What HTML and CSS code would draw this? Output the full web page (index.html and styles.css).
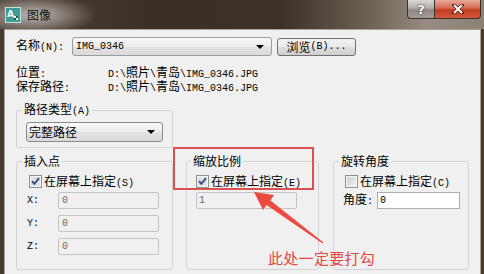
FILE: index.html
```html
<!DOCTYPE html>
<html lang="zh-CN">

<head>
    <meta charset="UTF-8">
    <meta name="viewport" content="width=device-width, initial-scale=1.0">
    <title>图像</title>
    <link rel="stylesheet" href="styles.css">
</head>

<body>
    <div class="window">
        <div class="titlebar">
            <svg class="app-icon" width="16" height="16" viewBox="0 0 16 16">
                <rect x="0.5" y="0.5" width="15" height="15" fill="#3f9c95" stroke="#bfe3df"/>
                <text x="2" y="10" font-family="DejaVu Sans" font-weight="bold" font-size="9" fill="#f4fbfa">A</text>
                <rect x="9" y="9" width="2" height="2" fill="#fff"/>
                <rect x="11" y="11" width="2" height="2" fill="#fff"/>
                <rect x="9" y="11" width="2" height="2" fill="#1f5a55"/>
                <rect x="11" y="9" width="2" height="2" fill="#1f5a55"/>
            </svg>
            <span class="title">图像</span>
            <div class="caption-buttons">
                <div class="cap-btn help">?</div>
                <div class="cap-btn close">
                    <svg width="12" height="10" viewBox="0 0 12 10">
                        <path d="M2 1 L10 9 M10 1 L2 9" stroke="#5a1a10" stroke-width="3.4" stroke-linecap="square"/>
                        <path d="M2 1 L10 9 M10 1 L2 9" stroke="#fff" stroke-width="2"/>
                    </svg>
                </div>
            </div>
        </div>

        <div class="client">
            <div class="name-row">
                <span class="name-label">名称<span class="m">(N):</span></span>
                <div class="combo name-combo"><span class="m">IMG_0346</span><span class="drop"></span></div>
                <div class="btn browse">浏览<span class="m">(B)...</span></div>
            </div>

            <div class="info">
                <div class="info-row">
                    <span class="info-label">位置<span class="m">:</span></span>
                    <span class="m">D:\<span class="cj">照片</span>\<span class="cj">青岛</span>\IMG_0346.JPG</span>
                </div>
                <div class="info-row">
                    <span class="info-label">保存路径<span class="m">:</span></span>
                    <span class="m">D:\<span class="cj">照片</span>\<span class="cj">青岛</span>\IMG_0346.JPG</span>
                </div>
            </div>

            <fieldset class="group path-group">
                <legend>路径类型<span class="m">(A)</span></legend>
                <div class="combo path-combo">完整路径<span class="drop"></span></div>
            </fieldset>

            <div class="groups">
                <fieldset class="group insert-group">
                    <legend>插入点</legend>
                    <div class="check-row">
                        <svg class="check" width="13" height="13" viewBox="0 0 13 13">
                            <rect x="0.5" y="0.5" width="12" height="12" fill="#f6f6f6" stroke="#8e8f8f"/>
                            <rect x="2" y="2" width="9" height="9" fill="#dde1e6"/>
                            <path d="M3 6.2 L5.4 8.8 L10 3.2" fill="none" stroke="#3b4f86" stroke-width="2"/>
                        </svg>
                        <span>在屏幕上指定<span class="m">(S)</span></span>
                    </div>
                    <div class="field-row first">
                        <span class="axis m">X:</span>
                        <div class="input disabled"><span class="m">0</span></div>
                    </div>
                    <div class="field-row">
                        <span class="axis m">Y:</span>
                        <div class="input disabled"><span class="m">0</span></div>
                    </div>
                    <div class="field-row">
                        <span class="axis m">Z:</span>
                        <div class="input disabled"><span class="m">0</span></div>
                    </div>
                </fieldset>

                <fieldset class="group scale-group">
                    <legend>缩放比例</legend>
                    <div class="check-row">
                        <svg class="check" width="13" height="13" viewBox="0 0 13 13">
                            <rect x="0.5" y="0.5" width="12" height="12" fill="#f6f6f6" stroke="#8e8f8f"/>
                            <rect x="2" y="2" width="9" height="9" fill="#dde1e6"/>
                            <path d="M3 6.2 L5.4 8.8 L10 3.2" fill="none" stroke="#3b4f86" stroke-width="2"/>
                        </svg>
                        <span>在屏幕上指定<span class="m">(E)</span></span>
                    </div>
                    <div class="field-row first">
                        <div class="input disabled"><span class="m">1</span></div>
                    </div>
                </fieldset>

                <fieldset class="group rotate-group">
                    <legend>旋转角度</legend>
                    <div class="check-row">
                        <svg class="check" width="13" height="13" viewBox="0 0 13 13">
                            <defs>
                                <linearGradient id="unchk" x1="0" y1="0" x2="1" y2="1">
                                    <stop offset="0" stop-color="#cfcfcf"/>
                                    <stop offset="1" stop-color="#f4f4f4"/>
                                </linearGradient>
                            </defs>
                            <rect x="0.5" y="0.5" width="12" height="12" fill="#f6f6f6" stroke="#8e8f8f"/>
                            <rect x="2" y="2" width="9" height="9" fill="url(#unchk)"/>
                        </svg>
                        <span>在屏幕上指定<span class="m">(C)</span></span>
                    </div>
                    <div class="field-row first">
                        <span class="angle-label">角度<span class="m">:</span></span>
                        <div class="input"><span class="m">0</span></div>
                    </div>
                </fieldset>
            </div>
        </div>

        <!-- annotation drawn over the dialog -->
        <div class="mark"></div>
        <svg class="pointer" width="484" height="274" viewBox="0 0 484 274">
            <polygon points="254,192 274,195 270.5,200.5 323.4,242.6 322.6,243.4 266.5,205 263,210" fill="#ec4a40"/>
        </svg>
        <div class="note">此处一定要打勾</div>
    </div>
</body>

</html>
```

FILE: styles.css
```css
* {
    box-sizing: border-box;
}

html,
body {
    margin: 0;
}

body {
    width: 484px;
    height: 274px;
    overflow: hidden;
    font: 12px/14px "Noto Sans CJK SC", sans-serif;
    color: #000;
    background: #f0f0f0;
}

.m {
    font-family: "Liberation Mono", monospace;
    font-size: 10px;
}

.m .cj {
    font-family: "Noto Sans CJK SC", sans-serif;
    font-size: 12px;
}

.window {
    position: relative;
    width: 484px;
    height: 274px;
    display: flex;
    flex-direction: column;
    background: #47392e;
}

.titlebar {
    flex: none;
    height: 29px;
    display: flex;
    align-items: flex-start;
    padding: 0 3px 0 5px;
    background:
        radial-gradient(ellipse 62px 20px at 34px 15px, rgba(196, 192, 188, 0.95), rgba(196, 192, 188, 0) 100%),
        linear-gradient(to right, #51443a 0%, #3b2f26 30%, #3c3027 58%, #6c6055 76%, #978c81 88%, #8c8074 100%);
}

.app-icon {
    margin-top: 7px;
}

.title {
    margin: 7px 0 0 6px;
    font-size: 12px;
    line-height: 16px;
    color: #111;
}

.caption-buttons {
    margin-left: auto;
    display: flex;
}

.cap-btn {
    height: 19px;
    display: flex;
    align-items: center;
    justify-content: center;
    border: 1px solid #3a312a;
    border-top: none;
}

.help {
    width: 27px;
    border-right: none;
    border-bottom-left-radius: 4px;
    background: linear-gradient(#d8d5d2, #b3aeaa 45%, #8e8883 55%, #a29d98);
    color: #fff;
    font: bold 13px/1 "DejaVu Sans", sans-serif;
    text-shadow: 0 0 2px #333, 0 0 1px #333;
}

.close {
    width: 47px;
    border-bottom-right-radius: 4px;
    background: linear-gradient(#e8a898, #d66a52 45%, #c23a1e 55%, #d4593c);
}

.client {
    flex: 1;
    margin: 0 3px 0 4px;
    padding: 7px 0 0 11px;
    background: #f0f0f0;
    border: 1px solid #a8a29b;
    border-bottom: none;
}

.name-row {
    display: flex;
    align-items: center;
    height: 19px;
}

.name-label {
    width: 56px;
}

.combo {
    display: flex;
    align-items: center;
    border: 1px solid #9c9c9c;
    border-radius: 3px;
    background: linear-gradient(#f8f8f8, #ececec 50%, #e2e2e2 51%, #dadada);
}

.drop {
    margin: 0 7px 0 auto;
    border-left: 4px solid transparent;
    border-right: 4px solid transparent;
    border-top: 4px solid #000;
}

.name-combo {
    width: 200px;
    height: 19px;
    padding-left: 3px;
}

.btn {
    display: flex;
    align-items: center;
    justify-content: center;
    border: 1px solid #707070;
    border-radius: 3px;
    background: linear-gradient(#f2f2f2, #ebebeb 50%, #dddddd 51%, #cfcfcf);
}

.browse {
    width: 79px;
    height: 18px;
    margin: 1px 0 0 5px;
}

.info {
    margin-top: 9px;
}

.info-row {
    display: flex;
    height: 14px;
}

.info-label {
    width: 92px;
}

.group {
    margin: 0;
    border: 1px solid #d3d3d3;
    border-radius: 3px;
}

.group legend {
    padding: 0 2px;
    line-height: 14px;
}

.path-group {
    width: 157px;
    margin-top: 9px;
    padding: 3px 9px 5px 9px;
}

.path-group legend {
    margin-left: -4px;
}

.path-combo {
    width: 137px;
    height: 20px;
    padding-left: 2px;
    border-color: #8a8a8a;
}

.groups {
    display: flex;
    align-items: stretch;
    margin-top: 6px;
}

.insert-group {
    width: 157px;
    padding: 7px 0 14px 12px;
}

.insert-group legend {
    margin-left: -7px;
}

.scale-group {
    width: 133px;
    margin-left: 13px;
    padding: 7px 0 0 9px;
}

.scale-group legend {
    margin-left: -5px;
}

.rotate-group {
    width: 136px;
    margin-left: 14px;
    padding: 7px 0 0 11px;
}

.rotate-group legend {
    margin-left: -6px;
}

.check-row {
    display: flex;
    align-items: center;
    height: 13px;
    line-height: 13px;
}

.check {
    flex: none;
    margin-right: 2px;
}

.field-row {
    display: flex;
    align-items: center;
    height: 17px;
    margin-top: 6px;
}

.field-row.first {
    margin-top: 4px;
}

.axis {
    width: 31px;
    margin-left: -2px;
}

.angle-label {
    width: 34px;
    margin-left: -2px;
}

.input {
    height: 17px;
    display: flex;
    align-items: center;
    padding-left: 2px;
    border: 1px solid #abadb3;
    background: #fff;
}

.input.disabled {
    width: 101px;
    border-color: #c4c4c4;
    border-radius: 2px;
    background: #f0f0f0;
    color: #6d6d6d;
}

.insert-group .input {
    padding-left: 3px;
}

.rotate-group .input {
    width: 83px;
}

.mark {
    position: absolute;
    left: 173px;
    top: 147px;
    width: 141px;
    height: 43px;
    border: 2px solid #dc5050;
}

.pointer {
    position: absolute;
    left: 0;
    top: 0;
}

.note {
    position: absolute;
    left: 268px;
    top: 249px;
    font-size: 15px;
    line-height: 17px;
    letter-spacing: 0.3px;
    color: #e4473f;
}
```
